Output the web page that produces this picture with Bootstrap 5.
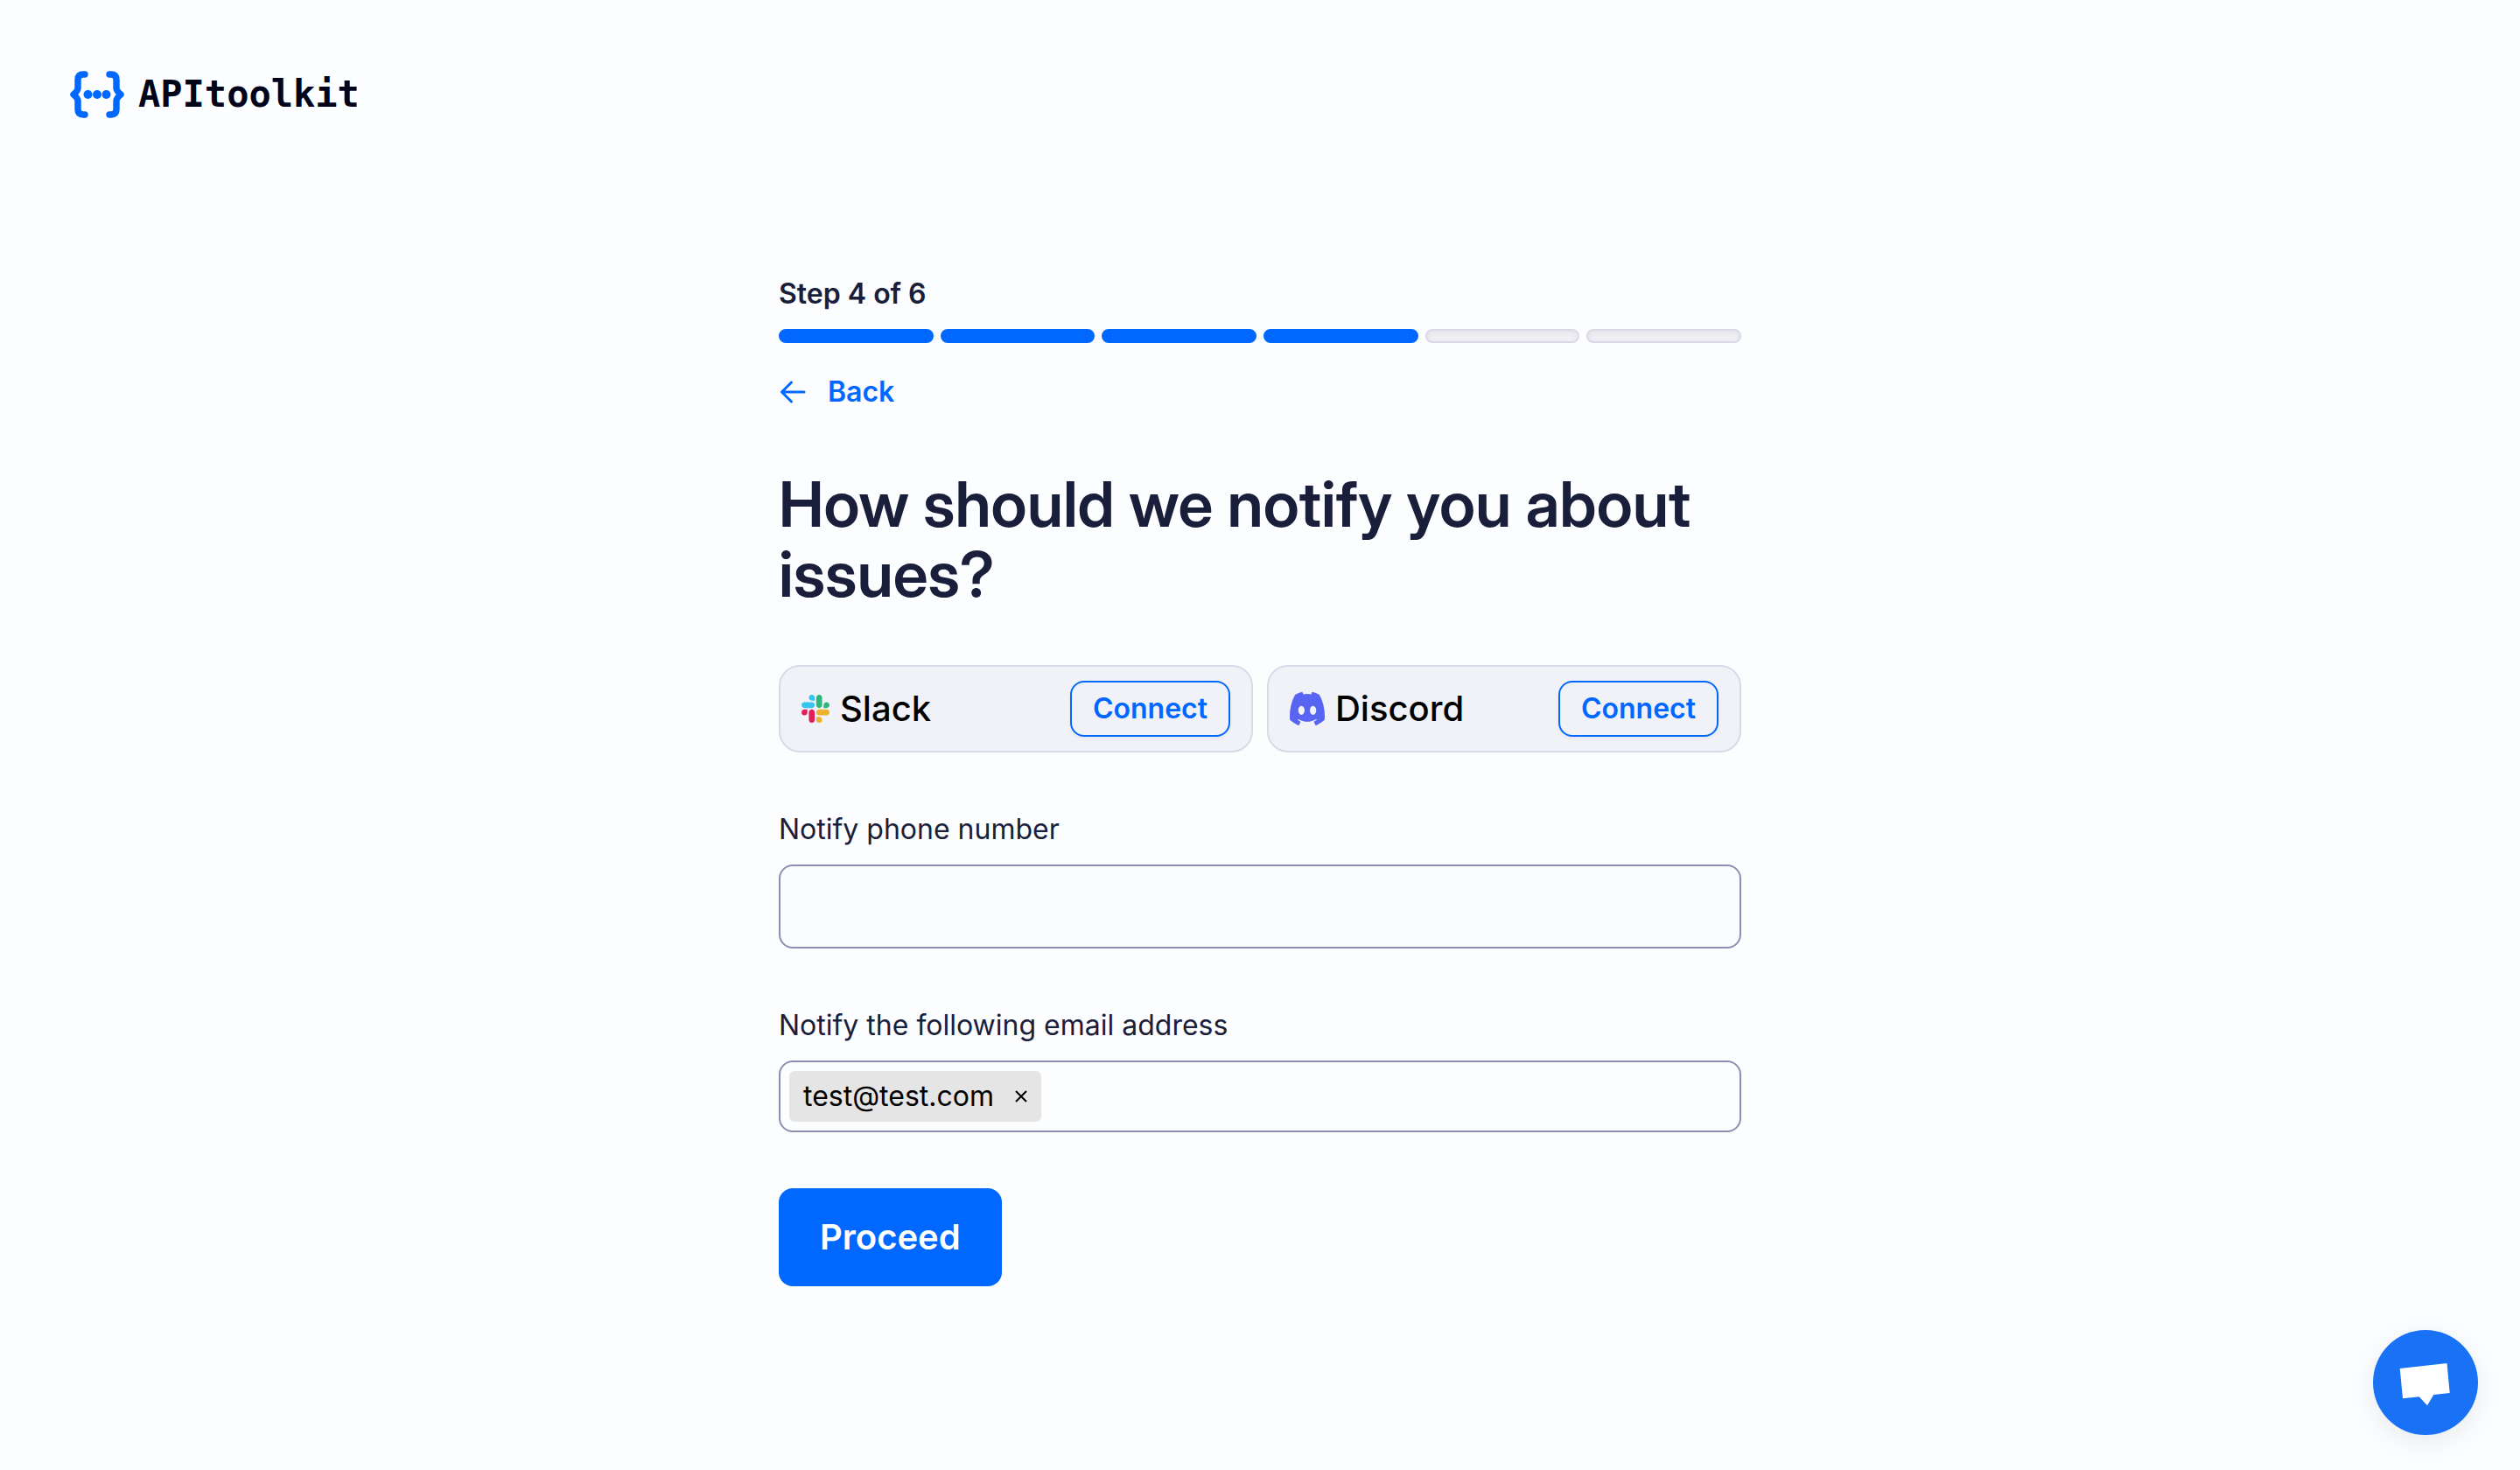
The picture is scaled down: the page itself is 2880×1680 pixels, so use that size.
<!DOCTYPE html>
<html lang="en">
<head>
<meta charset="utf-8">
<meta name="viewport" content="width=device-width, initial-scale=1">
<title>APItoolkit</title>
<link href="https://cdn.jsdelivr.net/npm/bootstrap@5.3.0/dist/css/bootstrap.min.css" rel="stylesheet">
<style>
  :root { --brand: #0068ff; --ink: #191e3b; --line: #d9d9e8; --field: #8a90b4; }
  body { font-family: Inter, "Liberation Sans", sans-serif; font-size: 32px; line-height: 48px; color: var(--ink); background: #fcfdff; }
  .site-head { padding: 80px; }
  .logo-link { gap: 16px; color: #02041a; line-height: 56px; }
  .logo-word { font-family: "DejaVu Sans Mono", monospace; font-weight: 700; font-size: 42px; }
  .step-main { max-width: 1132px; padding: 96px 16px; }
  .step-bars { gap: 8px; margin-top: 16px; }
  .step-bar { height: 16px; border-radius: 8px; background: #efeff4; border: 2px solid var(--line); box-shadow: inset 0 2px 6px rgba(0,0,0,.06); }
  .step-bar.done { background: var(--brand); border-color: var(--brand); box-shadow: none; }
  .back-link { gap: 24px; margin-top: 32px; color: var(--brand); }
  .step-title { font-family: "Inter Display", Inter, sans-serif; font-size: 72px; line-height: 80px; margin: 64px 0; }
  .apps { gap: 16px; }
  .app-tile { height: 100px; padding: 0 24px; border: 2px solid var(--line); border-radius: 24px; background: #f1f2f7; color: #000; }
  .app-name { gap: 12px; font-size: 40px; }
  .btn-connect { height: 64px; padding: 0 24px; font-size: 32px; line-height: 48px; border: 2px solid var(--brand); border-radius: 16px; color: var(--brand); box-shadow: 0 2px 4px rgba(0,0,0,.05); }
  .field-group { margin-top: 64px; }
  .field-label { margin-bottom: 16px; }
  .field-box { border: 2px solid var(--field); border-radius: 16px; font-size: 32px; }
  input.field-box { height: 96px; padding: 0 24px; background: #fafbfc; }
  .tag-box { padding: 10px; gap: 16px; }
  .tag-item { height: 58px; padding: 0 16px; gap: 24px; border-radius: 6px; background: #e5e5e5; color: #000; }
  .tag-close { line-height: 0; }
  .tag-input { min-width: 0; outline: 0; }
  .btn-proceed { height: 112px; margin-top: 64px; padding: 0 46px; font-size: 40px; border-radius: 16px; background: var(--brand); color: #fff; }
  .chat-btn { right: 48px; bottom: 40px; width: 120px; height: 120px; background: #1972f5; box-shadow: 0 8px 32px rgba(0,0,0,.08); }
</style>
<script src="https://cdn.jsdelivr.net/npm/bootstrap@5.3.0/dist/js/bootstrap.bundle.min.js"></script>
</head>
<body class="min-vh-100">
<header class="site-head d-flex">
  <a href="#" class="logo-link d-flex align-items-center text-decoration-none">
    <svg width="62" height="54" viewBox="0 0 62 54" fill="none" stroke="#0068ff" stroke-width="7.4" stroke-linecap="round" stroke-linejoin="round" aria-hidden="true">
      <path d="M17 4H15Q9 4 9 10V20Q9 22.500 4 27Q9 31.500 9 34V44Q9 50 15 50H17M45 4H47Q53 4 53 10V20Q53 22.500 58 27Q53 31.500 53 34V44Q53 50 47 50H45"/>
      <g fill="#0068ff" stroke="none"><circle cx="20.500" cy="27" r="5"/><circle cx="31" cy="27" r="5"/><circle cx="41.500" cy="27" r="5"/></g>
    </svg>
    <span class="logo-word">APItoolkit</span>
  </a>
</header>

<main class="step-main mx-auto">
  <div class="fw-semibold">Step 4 of 6</div>
  <div class="step-bars d-flex" role="progressbar" aria-label="Step 4 of 6" aria-valuenow="4" aria-valuemin="0" aria-valuemax="6">
    <div class="step-bar done flex-fill"></div>
    <div class="step-bar done flex-fill"></div>
    <div class="step-bar done flex-fill"></div>
    <div class="step-bar done flex-fill"></div>
    <div class="step-bar flex-fill"></div>
    <div class="step-bar flex-fill"></div>
  </div>
  <div class="d-flex">
    <a href="#" class="back-link d-flex align-items-center fw-semibold text-decoration-none">
      <svg width="32" height="28" viewBox="0 0 32 28" fill="none" stroke="currentColor" stroke-width="3" stroke-linecap="round" stroke-linejoin="round" aria-hidden="true"><path d="M29 14H3.500M14.500 3L3.500 14L14.500 25"/></svg>
      Back
    </a>
  </div>
  <h1 class="step-title fw-semibold">How should we notify you about issues?</h1>

  <form>
    <div class="apps d-flex">
      <div class="app-tile d-flex flex-fill w-50 align-items-center justify-content-between">
        <div class="app-name d-flex align-items-center fw-medium">
          <svg width="32" height="32" viewBox="0 0 122.800 122.800" aria-hidden="true">
            <path fill="#e01e5a" d="M25.800 77.600c0 7.100-5.800 12.900-12.900 12.900S0 84.700 0 77.600s5.800-12.900 12.900-12.900h12.900v12.900zm6.500 0c0-7.100 5.800-12.900 12.900-12.900s12.900 5.800 12.900 12.900v32.300c0 7.100-5.800 12.900-12.900 12.900s-12.900-5.800-12.900-12.900V77.600z"/>
            <path fill="#36c5f0" d="M45.200 25.800c-7.100 0-12.900-5.800-12.900-12.900S38.100 0 45.200 0s12.900 5.800 12.900 12.900v12.900H45.200zm0 6.500c7.100 0 12.900 5.800 12.900 12.900s-5.800 12.900-12.900 12.900H12.900C5.800 58.100 0 52.300 0 45.200s5.800-12.900 12.900-12.900h32.300z"/>
            <path fill="#2eb67d" d="M97 45.200c0-7.100 5.800-12.900 12.900-12.900s12.900 5.800 12.900 12.900-5.800 12.900-12.900 12.900H97V45.200zm-6.500 0c0 7.100-5.800 12.900-12.900 12.900s-12.900-5.800-12.900-12.900V12.900C64.700 5.800 70.500 0 77.600 0s12.900 5.800 12.900 12.900v32.300z"/>
            <path fill="#ecb22e" d="M77.600 97c7.100 0 12.900 5.800 12.900 12.900s-5.800 12.900-12.900 12.900-12.900-5.800-12.900-12.900V97h12.900zm0-6.500c-7.100 0-12.900-5.800-12.900-12.900s5.800-12.900 12.900-12.900h32.300c7.100 0 12.900 5.800 12.900 12.900s-5.800 12.900-12.900 12.900H77.600z"/>
          </svg>
          Slack
        </div>
        <button type="button" class="btn btn-connect fw-semibold">Connect</button>
      </div>
      <div class="app-tile d-flex flex-fill w-50 align-items-center justify-content-between">
        <div class="app-name d-flex align-items-center fw-medium">
          <svg width="40" height="40" viewBox="0 0 16 16" aria-hidden="true">
            <path fill="#5865f2" transform="matrix(1 0 0 1.260 0 -2.090)" d="M13.545 2.907a13.200 13.200 0 0 0-3.257-1.011.05.05 0 0 0-.052.025c-.141.250-.297.577-.406.833a12.200 12.200 0 0 0-3.658 0 8 8 0 0 0-.412-.833.050.050 0 0 0-.052-.025c-1.125.194-2.220.534-3.257 1.011a.04.04 0 0 0-.021.018C.356 6.024-.213 9.047.066 12.032q.003.022.021.037a13.300 13.300 0 0 0 3.995 2.020.050.050 0 0 0 .056-.019q.463-.630.818-1.329a.050.050 0 0 0-.010-.059l-.018-.011a9 9 0 0 1-1.248-.595.050.050 0 0 1-.020-.066l.015-.019q.127-.095.248-.195a.050.050 0 0 1 .051-.007c2.619 1.196 5.454 1.196 8.041 0a.050.050 0 0 1 .053.007q.121.100.248.195a.050.050 0 0 1-.004.085 8 8 0 0 1-1.249.594.050.050 0 0 0-.030.030.050.050 0 0 0 .003.041c.240.465.515.909.817 1.329a.050.050 0 0 0 .056.019 13.200 13.200 0 0 0 4.001-2.020.050.050 0 0 0 .021-.037c.334-3.451-.559-6.449-2.366-9.106a.030.030 0 0 0-.020-.019m-8.198 7.307c-.789 0-1.438-.724-1.438-1.612s.637-1.613 1.438-1.613c.807 0 1.450.730 1.438 1.613 0 .888-.637 1.612-1.438 1.612m5.316 0c-.788 0-1.438-.724-1.438-1.612s.637-1.613 1.438-1.613c.807 0 1.451.730 1.438 1.613 0 .888-.631 1.612-1.438 1.612"/>
          </svg>
          Discord
        </div>
        <button type="button" class="btn btn-connect fw-semibold">Connect</button>
      </div>
    </div>

    <div class="field-group">
      <label class="field-label d-block" for="phone">Notify phone number</label>
      <input type="tel" id="phone" class="field-box form-control">
    </div>

    <div class="field-group">
      <label class="field-label d-block" for="emails">Notify the following email address</label>
      <div class="field-box tag-box d-flex align-items-center">
        <span class="tag-item d-flex align-items-center">test@test.com
          <button type="button" class="tag-close border-0 bg-transparent p-0" aria-label="Remove test@test.com"><svg width="14" height="14" viewBox="0 0 14 14" fill="none" stroke="#000" stroke-width="2" aria-hidden="true"><path d="M1 1L13 13M13 1L1 13"/></svg></button>
        </span>
        <input type="email" id="emails" class="tag-input flex-fill border-0 bg-transparent p-0">
      </div>
    </div>

    <button type="submit" class="btn btn-proceed fw-semibold">Proceed</button>
  </form>
</main>

<button type="button" class="chat-btn position-fixed rounded-circle border-0 p-0" aria-label="Open chat">
  <svg class="d-block" width="120" height="120" viewBox="0 0 120 120" aria-hidden="true"><path fill="#fff" d="M30.700 44L84.500 38L87.700 72L69.300 74L62 86.300L52.700 76.300L34 78.300Z"/></svg>
</button>
</body>
</html>
